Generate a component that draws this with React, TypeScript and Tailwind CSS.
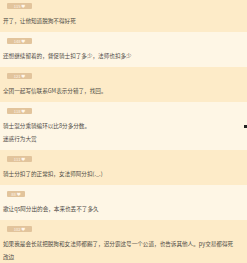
import React from "react";

type Row = { badge: string; lines: string[]; wide?: boolean };

const rows: Row[] = [
  { badge: "115 ♥", lines: ["开了，让他知道脱狗不得好死"], wide: true },
  { badge: "148 ♥", lines: ["还想继续留着的，督促骑士扣了多少，法师也扣多少"], wide: true },
  { badge: "121 ♥", lines: ["全团一起写信联系GM表示分错了，找回。"], wide: true },
  { badge: "118 ♥", lines: ["骑士混分乘骑编环以比8分多分数。", "迷惑行为大赏"], wide: true },
  { badge: "111 ♥", lines: ["骑士分扣了的正常扣，女法师阿分扣(._.)"], wide: true },
  { badge: "88 ♥", lines: ["歌让qs阿分出的会，本来也丢不了多久"], wide: false },
  { badge: "102 ♥", lines: ["如果我是会长就把脱狗和女法师都踢了，迟分霸这号一个公道，也告诉其他人。py交易都得死", "改边"], wide: true },
];

export default function App() {
  return (
    <div
      className="relative w-[247px] h-[263px] overflow-hidden bg-[#fef6e5]"
      style={{ fontFamily: '"Noto Sans CJK SC", "Noto Sans", sans-serif' }}
    >
      {rows.map((r, i) => (
        <div
          key={i}
          className={
            (i % 2 === 0 ? "bg-[#fdebc8] " : "bg-[#fef6e5] ") +
            (i === 0 ? "pt-[3px] " : "pt-[6px] ") +
            "pb-[4px] pl-[3px] pr-[4px]"
          }
        >
          <div
            className={
              (r.wide ? "w-[25px] " : "w-[18px] ") +
              "ml-[4px] h-[6px] rounded-[1px] bg-[#e2c49c] text-[#fff6ea] text-[4px] leading-[6px] flex items-center justify-center"
            }
          >
            {r.badge}
          </div>
          <div className="mt-[6px] text-[5.6px] leading-[13px] text-[#4f4b46] whitespace-nowrap">
            {r.lines.map((l, j) => (
              <div key={j}>{l}</div>
            ))}
          </div>
        </div>
      ))}
      <div className="absolute left-[244px] top-[125px] w-[3px] h-[3px] bg-[#222]" />
    </div>
  );
}
